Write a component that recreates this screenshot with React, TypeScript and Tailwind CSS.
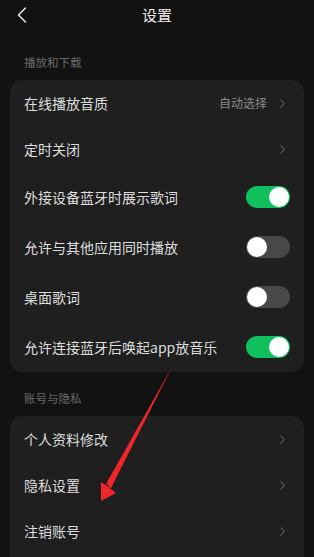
import { ChevronLeft, ChevronRight } from 'lucide-react'

type Row = {
    label: string
    value?: string
    toggle?: boolean
}

const playRows: Row[] = [
    { label: '在线播放音质', value: '自动选择' },
    { label: '定时关闭' },
    { label: '外接设备蓝牙时展示歌词', toggle: true },
    { label: '允许与其他应用同时播放', toggle: false },
    { label: '桌面歌词', toggle: false },
    { label: '允许连接蓝牙后唤起app放音乐', toggle: true },
]

const accountRows: Row[] = [
    { label: '个人资料修改' },
    { label: '隐私设置' },
    { label: '注销账号' },
]

function Toggle({ on }: { on: boolean }) {
    return (
        <div
            className={`flex h-[22px] w-[44px] items-center rounded-full px-[1px] ${
                on ? 'justify-end bg-[#0fc05d]' : 'justify-start bg-[#484848]'
            }`}
        >
            <div className="h-[20px] w-[20px] rounded-full bg-white" />
        </div>
    )
}

function SettingRow({ row }: { row: Row }) {
    const isToggle = row.toggle !== undefined
    return (
        <div className={`flex items-center justify-between pl-[14px] pr-[14px] ${isToggle ? 'h-[50px]' : 'h-[46px]'}`}>
            <span className="text-[14px] text-[#dedede]">{row.label}</span>
            {isToggle ? (
                <Toggle on={!!row.toggle} />
            ) : (
                <div className="flex items-center gap-[8px]">
                    {row.value && <span className="text-[12px] text-[#8a8a8a]">{row.value}</span>}
                    <ChevronRight size={15} strokeWidth={1.5} className="text-[#7a7a7a]" />
                </div>
            )}
        </div>
    )
}

export default function App() {
    return (
        <div
            className="relative h-[557px] w-[314px] overflow-hidden bg-[#121212]"
            style={{ fontFamily: '"Noto Sans CJK SC", "Noto Sans", sans-serif' }}
        >
            <header className="relative flex h-[30px] items-center justify-center">
                <ChevronLeft size={28} strokeWidth={1.3} className="absolute left-[8px] top-[1px] text-[#e6e6e6]" />
                <h1 className="text-[15px] text-[#ececec]">设置</h1>
            </header>

            <div className="px-[24px] pt-[22px] pb-[8px] text-[11.5px] leading-[20px] text-[#6a6a6a]">播放和下载</div>
            <div className="mx-[10px] rounded-[12px] bg-[#1f1f1f]">
                {playRows.map((r) => (
                    <SettingRow key={r.label} row={r} />
                ))}
            </div>

            <div className="px-[24px] pt-[16px] pb-[8px] text-[11.5px] leading-[20px] text-[#6a6a6a]">账号与隐私</div>
            <div className="mx-[10px] rounded-[12px] bg-[#1f1f1f] pb-[20px]">
                {accountRows.map((r) => (
                    <SettingRow key={r.label} row={r} />
                ))}
            </div>

            {/* red annotation arrow */}
            <svg className="pointer-events-none absolute left-0 top-0" width="314" height="557" viewBox="0 0 314 557">
                <path d="M172 367 L110 486 L106 484 Z" fill="#f0262a" />
                <path d="M172 367 L108 487 L111 488 Z" fill="#f0262a" />
                <path d="M101 501 L101 482 L107 486 L116 493 Z" fill="#f0262a" />
            </svg>
        </div>
    )
}
